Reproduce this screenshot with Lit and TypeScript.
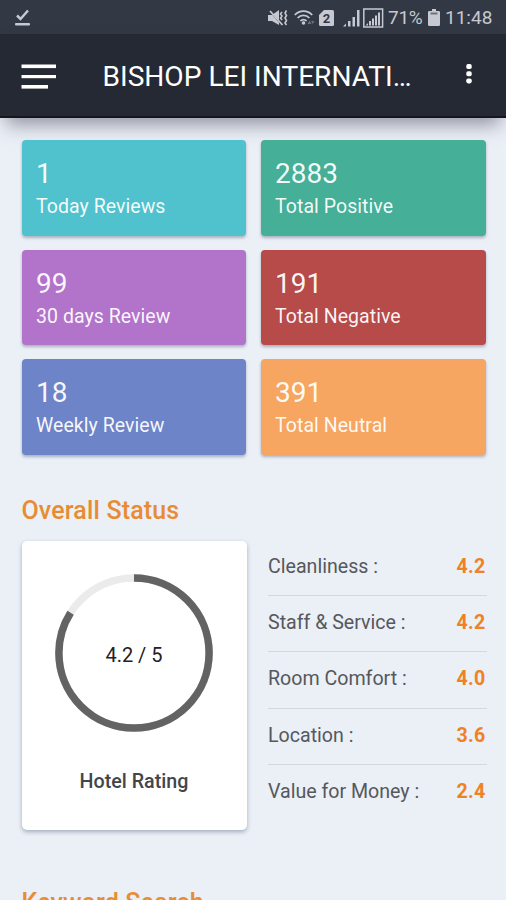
import { LitElement, html, css, svg } from "lit";
import { customElement, property } from "lit/decorators.js";

@customElement("status-bar")
class StatusBar extends LitElement {
  static styles = css`
    :host { display: flex; align-items: center; height: 34px; background: #323844; color: #c6c9d1; padding: 2px 14px 0 15px; box-sizing: border-box; font-size: 19px; line-height: 32px; }
    svg { display: block; fill: currentColor; flex: none; }
    .grow { flex: 1; }
    .mute { margin-right: 6px; }
    .wifi { margin-right: 4px; }
    .sim { margin-right: 8px; }
    .pct { width: 35px; margin-left: 4px; white-space: nowrap; letter-spacing: -.3px; }
    .time { width: 47px; margin-left: 5px; white-space: nowrap; }
    .battery { margin-left: 5px; }
    .line { fill: none; stroke: currentColor; }
  `;
  render() {
    return html`
      <svg width="16" height="18" viewBox="0 0 16 18"><path class="line" stroke-width="2.5" d="M2 6.5 5.5 10 13 1.5"/><rect x="0" y="14" width="15" height="2.4" rx="1"/></svg>
      <span class="grow"></span>
      <svg class="mute" width="20" height="18" viewBox="0 0 20 18">
        <path d="M0 6h4l7-5v15l-7-4H0z"/><path stroke="#323844" stroke-width="1.2" d="M1 1 14 16"/><path class="line" stroke-width="1.8" d="M2 2 14.5 16"/>
        <path class="line" stroke-width="1.6" d="M14 3l-1.5 2L14 7l-1.5 2L14 11M18.500 1.500 17 4l1.500 2.500L17 9l1.500 2.500L17 14l1.500 2"/>
      </svg>
      <svg class="wifi" width="21" height="18" viewBox="0 0 21 18">
        <path class="line" stroke-width="1.8" d="M.8 6C5.500.8 13.500.8 18.200 6M3.600 9c3.200-3.400 8.600-3.400 11.800 0M6.400 12c1.800-1.900 4.400-1.900 6.200 0"/>
        <circle cx="9.500" cy="14" r="1.800"/><path opacity=".4" d="M13.500 15l2-3.500 2 3.500zM17 12h3.500L18.800 15z"/>
      </svg>
      <svg class="sim" width="16" height="18" viewBox="0 0 16 18"><path d="M5 1h8.500A1.500 1.500 0 0 1 15 2.500v13a1.500 1.500 0 0 1-1.500 1.500h-12A1.500 1.500 0 0 1 0 15.500V6z"/><text x="7.600" y="14" text-anchor="middle" font-size="13" font-weight="700" fill="#323844">2</text></svg>
      <svg width="41" height="20" viewBox="0 0 41 20">
        <path d="M0 18.500l3-3v3zM5 13h2.500v5.500H5zM9.500 9H12v9.500H9.500zM14 2h2.500v16.500H14z"/>
        <rect class="line" x="20.800" y="1" width="18.800" height="18" stroke-width="1.500"/>
        <path d="M22.500 17.500l2.500-2.500v2.500zM26 13h2v4.500h-2zM29 10.500h2v7h-2zM32 7.500h2v10h-2zM35 4.500h2v13h-2z"/>
      </svg>
      <span class="pct">71%</span>
      <svg class="battery" width="12" height="18" viewBox="0 0 12 18"><path d="M4 0h4v2h2.800A1.200 1.200 0 0 1 12 3.200v12.600a1.200 1.200 0 0 1-1.200 1.200H1.200A1.200 1.200 0 0 1 0 15.800V3.200A1.200 1.200 0 0 1 1.200 2H4z"/><path fill="#6c727e" d="M2.500 3.500h7v2h-7z"/></svg>
      <span class="time">11:48</span>`;
  }
}

@customElement("app-header")
class AppHeader extends LitElement {
  static styles = css`
    :host { display: flex; align-items: center; height: 84px; background: #252934; box-sizing: border-box; padding: 0 33px 0 21px; border-bottom: 2px solid #141721; color: #fff; box-shadow: 0 12px 18px -6px rgba(50, 50, 72, .5); }
    svg { display: block; fill: #fff; flex: none; }
    h1 { margin: 0 0 0 45.500px; font-size: 28.1px; line-height: 36px; font-weight: 400; width: 318px; white-space: nowrap; padding-top: 3px; }
    .dots { margin: 0 0 2px auto; }
    .menu { margin-top: 3px; }
  `;
  @property() heading = "";
  render() {
    return html`
      <svg class="menu" width="36" height="26" viewBox="0 0 36 26"><rect x=".5" y=".5" width="34.500" height="3.600"/><rect x=".5" y="11" width="34.500" height="3.200"/><rect x=".5" y="21" width="26.500" height="3.600"/></svg>
      <h1>${this.heading}</h1>
      <svg class="dots" width="8" height="20" viewBox="0 0 8 20"><rect x="1.300" y="0" width="5.400" height="5" rx="1.800"/><rect x="1.300" y="7.200" width="5.400" height="5" rx="1.800"/><rect x="1.300" y="14.400" width="5.400" height="5" rx="1.800"/></svg>`;
  }
}

@customElement("stat-card")
class StatCard extends LitElement {
  static styles = css`
    :host { display: flex; flex-direction: column; gap: 1px; box-sizing: border-box; height: 95.5px; padding: 15px 14.5px 0; border-radius: 4px; color: #fffffff0; box-shadow: 0 2px 3px rgba(70, 85, 115, .4); }
    :host([tone="teal"]) { background: #50c2ce; }
    :host([tone="green"]) { background: #45af97; }
    :host([tone="purple"]) { background: #b274cb; }
    :host([tone="red"]) { background: #b64b4a; }
    :host([tone="blue"]) { background: #6e84c8; }
    :host([tone="orange"]) { background: #f6a661; }
    .value { font-size: 28px; line-height: 38px; }
    .label { font-size: 19.5px; line-height: 26px; letter-spacing: .05px; white-space: nowrap; }
  `;
  @property() value = "";
  @property() label = "";
  render() {
    return html`<div class="value">${this.value}</div><div class="label">${this.label}</div>`;
  }
}

@customElement("rating-ring")
class RatingRing extends LitElement {
  static styles = css`
    :host { display: block; }
    svg { display: block; }
    circle { fill: none; stroke-width: 7.5; }
    .track { stroke: #ebebeb; }
    .bar { stroke: #636363; }
    text { font-size: 20px; fill: #222; text-anchor: middle; }
  `;
  @property({ type: Number }) value = 0;
  @property({ type: Number }) max = 5;
  render() {
    const share = (this.value / this.max) * 100;
    return html`<svg width="158" height="158" viewBox="0 0 158 158">
      <circle class="track" cx="79" cy="79" r="75.100"/>
      ${svg`<circle class="bar" cx="79" cy="79" r="75.100" pathLength="100" stroke-dasharray="${share} 100" transform="rotate(-90 79 79)"/>`}
      <text x="79" y="87.500">${this.value} / ${this.max}</text>
    </svg>`;
  }
}

@customElement("app-root")
class AppRoot extends LitElement {
  static styles = css`
    :host { display: block; height: 900px; overflow: hidden; background: #ebeff6; font-family: Roboto, "Liberation Sans", sans-serif; }
    main { padding: 22px 20.5px 0 21.5px; }
    .stats { display: grid; grid-template-columns: 1fr 1fr; gap: 14.2px; }
    h2 { margin: 0; font-size: 25px; line-height: 32px; font-weight: 500; letter-spacing: .15px; color: #e88c33; white-space: nowrap; }
    .overall { padding-top: 40px; }
    .status { display: grid; grid-template-columns: 225px 1fr; column-gap: 21.5px; padding-top: 14px; }
    .rating { display: flex; flex-direction: column; align-items: center; box-sizing: border-box; height: 289.5px; padding-top: 33px; background: #fff; border-radius: 5px; box-shadow: 0 2px 4px rgba(70, 95, 125, .45); }
    .caption { margin-top: 37px; font-size: 19.7px; line-height: 26px; font-weight: 500; color: #444549; }
    .scores { margin: -1px -1px 0 0; }
    .row { display: flex; justify-content: space-between; box-sizing: border-box; height: 56.25px; padding: 14px 1px 0 0; font-size: 19.6px; line-height: 26px; color: #55585d; white-space: nowrap; border-bottom: 1.5px solid #d4d7dc; }
    .row:last-child { border: 0; }
    .score { color: #ee8224; font-weight: 700; letter-spacing: .3px; }
    .keywords { padding-top: 56.500px; }
  `;
  private stats = [
    ["teal", "1", "Today Reviews"],
    ["green", "2883", "Total Positive"],
    ["purple", "99", "30 days Review"],
    ["red", "191", "Total Negative"],
    ["blue", "18", "Weekly Review"],
    ["orange", "391", "Total Neutral"],
  ];
  private scores = [
    ["Cleanliness :", "4.2"],
    ["Staff & Service :", "4.2"],
    ["Room Comfort :", "4.0"],
    ["Location :", "3.6"],
    ["Value for Money :", "2.4"],
  ];
  render() {
    return html`
      <status-bar></status-bar>
      <app-header heading="BISHOP LEI INTERNATI…"></app-header>
      <main>
        <section class="stats">
          ${this.stats.map(([tone, value, label]) => html`<stat-card tone=${tone} .value=${value} .label=${label}></stat-card>`)}
        </section>
        <h2 class="overall">Overall Status</h2>
        <section class="status">
          <div class="rating">
            <rating-ring .value=${4.2} .max=${5}></rating-ring>
            <div class="caption">Hotel Rating</div>
          </div>
          <div class="scores">
            ${this.scores.map(([label, score]) => html`<div class="row"><span>${label}</span><span class="score">${score}</span></div>`)}
          </div>
        </section>
        <h2 class="keywords">Keyword Search</h2>
      </main>`;
  }
}
